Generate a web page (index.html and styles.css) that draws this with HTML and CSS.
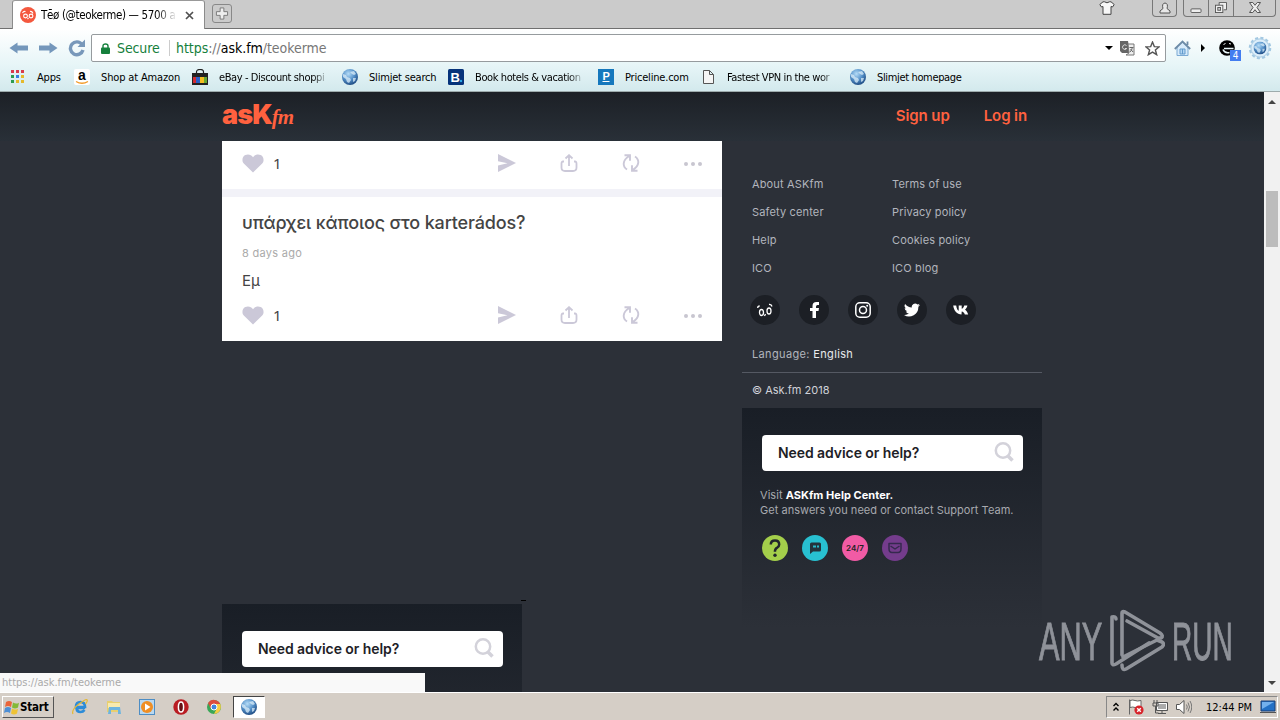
FILE: index.html
```html
<!DOCTYPE html>
<html lang="en">

<head>
  <meta charset="utf-8">
  <title>Tēø (@teokerme) — 5700 answers</title>
  <link rel="stylesheet" href="styles.css">
</head>

<body>
  <!-- shared icons -->
  <svg class="sprite" width="0" height="0">
    <defs>
      <radialGradient id="globe-fill" cx=".4" cy=".3" r=".7">
        <stop offset="0" stop-color="#b5dcf7"/>
        <stop offset=".55" stop-color="#5591c9"/>
        <stop offset="1" stop-color="#214f87"/>
      </radialGradient>
    </defs>
    <symbol id="globe" viewBox="0 0 16 16">
      <circle cx="8" cy="8" r="8" fill="url(#globe-fill)"/>
      <path d="M1 5l3 1 1 2 3 1 1 2-2 3-2-1-1-3-3-2zM8 3l4-1 2 3-2 1-2-1zM11 9l3 0-1 3-2 1z" fill="#d9ecf8" opacity=".75"/>
    </symbol>
    <symbol id="heart" viewBox="0 0 22 19">
      <path d="M11 18.500L1.800 9.600C-.5 7 .2 2.600 3.300 1.100 6-.2 9.300.6 11 3.200 12.700.6 16-.2 18.700 1.100c3.100 1.500 3.800 5.900 1.500 8.500z"/>
    </symbol>
    <symbol id="send" viewBox="0 0 18 18">
      <path d="M0 0l18 9L0 18v-6.500L9.500 9.200 0 7.200z"/>
    </symbol>
    <symbol id="share" viewBox="0 0 18 18">
      <path d="M4 7.500H3q-1.500 0-1.500 2v4q0 3.500 3.500 3.500h8q3.500 0 3.500-3.500v-4q0-2-1.500-2h-1M9 12V1.500M5.500 4.500L9 1.200l3.500 3.300" fill="none" stroke-width="1.800"/>
    </symbol>
    <symbol id="reask" viewBox="0 0 18 18">
      <path d="M5 15.500C.5 12.500 0 6.500 7.300 2M2.500 1.300h5.500v5.500M13 2.500c4.500 3 5 9-2.300 13.500M15.500 16.700H10v-5.500" fill="none" stroke-width="1.900"/>
    </symbol>
    <symbol id="search" viewBox="0 0 20 20">
      <circle cx="9" cy="8.500" r="7.200" fill="none" stroke-width="2.500"/>
      <path d="M13.500 13.500l5 5" stroke-width="3.600"/>
    </symbol>
  </svg>

  <div class="window">
    <div class="tab-strip">
      <div class="tab">
        <svg class="tab-icon" viewBox="0 0 16 16"><circle cx="8" cy="8" r="8" fill="#f4583e"/><g fill="none" stroke="#fff" stroke-width="1.100"><circle cx="5.500" cy="9" r="1.900"/><circle cx="11" cy="9" r="1.900"/><path d="M2.500 6q1-2 3-1.500M10 4.500q2-.5 3 2M7.500 12l1-1"/></g></svg>
        <span class="tab-title">Tēø (@teokerme) — 5700 a</span>
        <svg class="tab-close" viewBox="0 0 9 9"><path d="M1 1l7 7M8 1L1 8" stroke="#505050" stroke-width="1.700"/></svg>
      </div>
      <div class="new-tab"><svg viewBox="0 0 14 14"><path d="M5 1h4v4h4v4H9v4H5V9H1V5h4z" fill="#eee" stroke="#777"/></svg></div>
      <svg class="shirt" viewBox="0 0 16 14"><path d="M4 .8L.8 3.500 2.500 6 4 5.500V13.300h8V5.500L13.500 6l1.700-2.500L12 .8h-1.500q-2.500 2-5 0z" fill="#f7f7f7" stroke="#444"/></svg>
      <div class="user-button"><svg viewBox="0 0 12 12"><path d="M1 11V9l3-2.500q-1.500-5 2-5.500 3.500.5 2 5.500L11 9v2z" fill="#e8e8e8" stroke="#555"/></svg></div>
      <div class="window-buttons">
        <span class="minimize"><svg viewBox="0 0 12 12"><rect x=".5" y="7.500" width="11" height="4" rx="1" fill="#eee" stroke="#555"/></svg></span>
        <span class="restore"><svg viewBox="0 0 13 12"><path d="M4.500 3.500v-3h8v8h-3" fill="#eee" stroke="#555"/><rect x=".5" y="3.500" width="8" height="8" fill="#eee" stroke="#555"/><rect x="3" y="6" width="3" height="3" fill="#ccc" stroke="#555"/></svg></span>
        <span class="close"><svg viewBox="0 0 12 11"><path d="M.5.5h3.300L6 3.300 8.200.5h3.300L8 5.500l3.500 5H8.200L6 7.700l-2.200 2.800H.5L4 5.500z" fill="#eee" stroke="#555"/></svg></span>
      </div>
    </div>

    <div class="toolbar">
      <svg class="arrow" viewBox="0 0 19 12"><path d="M0 6L8 .5v3h10.500v5H8v3z" fill="#7497bb"/></svg>
      <svg class="arrow forward" viewBox="0 0 19 12"><path d="M19 6L11 .5v3H.5v5H11v3z" fill="#7497bb"/></svg>
      <svg class="reload" viewBox="0 0 18 18"><path d="M14 5.500A6.400 6.400 0 1 0 15 11" fill="none" stroke="#7898ba" stroke-width="3.400"/><path d="M17 .5V8H9.500z" fill="#7898ba"/></svg>
      <div class="address">
        <svg class="lock" viewBox="0 0 9 11"><rect y="4.500" width="9" height="6.500" rx="1" fill="#15803c"/><path d="M2 5V3q0-2 2.500-2T7 3v2" fill="none" stroke="#15803c" stroke-width="1.400"/></svg>
        <span class="secure">Secure</span>
        <span class="url"><span class="scheme">https</span>://<b>ask.fm</b>/teokerme</span>
        <svg class="drop" viewBox="0 0 8 4"><path d="M0 0h8L4 4z"/></svg>
        <svg class="translate" viewBox="0 0 15 15"><path d="M0 0h8l2 12H2l-2-2z" fill="#666"/><path d="M8 3h6v11H6l3-2z" fill="#eee" stroke="#777"/><path d="M6.500 4.500a2.300 2.300 0 1 0 .2 3H5" fill="none" stroke="#ddd"/><path d="M9.500 6.500h4M12.500 6q-.5 3-2.500 5M10.500 8l2.500 3" fill="none" stroke="#666"/></svg>
        <svg class="star" viewBox="0 0 14 14"><path d="M7 1l1.700 4.200 4.500.3-3.500 2.900 1.200 4.400L7 10.400l-3.900 2.400 1.200-4.400L.8 5.500l4.500-.3z" fill="none" stroke="#555" stroke-width="1.300"/></svg>
      </div>
      <svg class="home" viewBox="0 0 17 16"><path d="M3 7v8.500h11V7L8.500 2z" fill="#d8ebfa" stroke="#7baad4"/><path d="M.8 9L8.500 1.500 16.200 9M13.500 5V1.500" fill="none" stroke="#6d8ba7" stroke-width="1.800"/><path d="M6 9h5v5H6zM8.500 9v5" fill="#b3d5f2" stroke="#639bcc"/></svg>
      <svg class="more" viewBox="0 0 4 8"><path d="M0 0l4 4-4 4z"/></svg>
      <div class="extension">
        <svg viewBox="0 0 16 16"><circle cx="8" cy="8" r="7.800"/><path d="M5 8.500h9.500M4 9.500q1.500 4 6.500 3" fill="none" stroke="#e9f7f9" stroke-width="1.500"/><path d="M4.500 4.500l2-1M10 3.500l2 .5" stroke="#fff"/></svg>
        <span class="count">4</span>
      </div>
      <svg class="settings" viewBox="0 0 24 24"><circle cx="12" cy="12" r="10" fill="#d2e7f4" stroke="#a3c8e2" stroke-width="2.500" stroke-dasharray="3 2.240"/><circle cx="12" cy="12" r="9" fill="#dceefa" stroke="#b5d3e7"/><use href="#globe" x="5.500" y="5.500" width="13" height="13"/></svg>
    </div>

    <div class="bookmarks">
      <a class="apps"><svg viewBox="0 0 16 16"><path d="M1 1h3v3H1zM6 1h3v3H6zM11 1h3v3h-3z" fill="#d93b4c"/><path d="M1 6h3v3H1zM1 11h3v3H1z" fill="#2c9c50"/><path d="M6 6h3v3H6z" fill="#347ee0"/><path d="M11 6h3v3h-3zM6 11h3v3H6zM11 11h3v3h-3z" fill="#e5b92a"/></svg><span>Apps</span></a>
      <a class="amazon"><svg viewBox="0 0 16 16"><rect width="16" height="16" rx="2" fill="#fff"/><text x="4" y="11" class="amazon-a">a</text><path d="M2 12.500q6 3.500 12 0" fill="none" stroke="#f39b29" stroke-width="1.300"/></svg><span>Shop at Amazon</span></a>
      <a class="ebay"><svg viewBox="0 0 16 16"><path d="M0 4h16v12H0z" fill="#222"/><path d="M1 8h3v6H1z" fill="#d32c33"/><path d="M4 8h4v6H4z" fill="#2b60c7"/><path d="M8 8h4v6H8z" fill="#f4bd20"/><path d="M12 8h3v6h-3z" fill="#68a82f"/><path d="M4.500 7V3q0-2.500 3.500-2.500T11.500 3v4" fill="none" stroke="#222" stroke-width="1.200"/></svg><span class="fade">eBay - Discount shoppi</span></a>
      <a class="slimjet"><svg><use href="#globe"/></svg><span>Slimjet search</span></a>
      <a class="booking"><svg viewBox="0 0 16 16"><rect width="16" height="16" rx="1.500" fill="#06337b"/><text x="2.500" y="12.500" class="booking-b">B</text><circle cx="13" cy="12" r="1.200" fill="#29a8e8"/></svg><span class="fade">Book hotels &amp; vacation</span></a>
      <a class="priceline"><svg viewBox="0 0 16 16"><rect width="16" height="16" fill="#1578bd"/><text x="4.500" y="11" class="priceline-p">P</text><path d="M4.500 12.500h7" stroke="#fff"/></svg><span>Priceline.com</span></a>
      <a class="vpn"><svg viewBox="0 0 16 16"><path d="M1.500 1.500h6l4 4v9h-10zM7.500 1.500v4h4" fill="#f5f5f5" stroke="#555"/></svg><span class="fade">Fastest VPN in the wor</span></a>
      <a class="slimjet-home"><svg><use href="#globe"/></svg><span>Slimjet homepage</span></a>
    </div>

    <div class="viewport">
      <div class="page">
        <div class="header">
          <div class="logo"><span class="logo-ask">asK</span><span class="logo-fm">fm</span></div>
          <nav><a class="sign-up">Sign up</a><a class="log-in">Log in</a></nav>
        </div>
        <div class="content">
          <div class="main-column">
            <div class="card">
              <div class="actions first">
                <svg class="heart"><use href="#heart"/></svg><span class="likes">1</span>
                <svg class="action"><use href="#send"/></svg>
                <svg class="action line"><use href="#share"/></svg>
                <svg class="action line"><use href="#reask"/></svg>
                <span class="dots"><i></i><i></i><i></i></span>
              </div>
              <div class="separator"></div>
              <h2>υπάρχει κάποιος στο karterádos?</h2>
              <p class="date">8 days ago</p>
              <p class="answer">Εμ</p>
              <div class="actions">
                <svg class="heart"><use href="#heart"/></svg><span class="likes">1</span>
                <svg class="action"><use href="#send"/></svg>
                <svg class="action line"><use href="#share"/></svg>
                <svg class="action line"><use href="#reask"/></svg>
                <span class="dots"><i></i><i></i><i></i></span>
              </div>
            </div>
            <div class="dash"></div>
            <div class="help-banner">
              <div class="help-search"><span>Need advice or help?</span><svg><use href="#search"/></svg></div>
            </div>
          </div>
          <div class="side-column">
            <div class="links">
              <a>About ASKfm</a><a>Terms of use</a>
              <a>Safety center</a><a>Privacy policy</a>
              <a>Help</a><a>Cookies policy</a>
              <a>ICO</a><a>ICO blog</a>
            </div>
            <div class="social">
              <span><svg viewBox="0 0 16 16"><g fill="none" stroke="#fff" stroke-width="1.300"><ellipse cx="4.500" cy="10.500" rx="2" ry="3"/><ellipse cx="12" cy="9" rx="2" ry="3"/><path d="M.7 6q0-2 2-2M12 2.500q2.500-.3 3 2M7.500 14l1-2"/></g></svg></span>
              <span><svg viewBox="0 0 16 16"><path d="M6.500 16V9H4V6h2.500V4q0-4 4-4H13v3h-1.500Q10 3 10 4.500V6h3l-.5 3H10v7z" fill="#fff"/></svg></span>
              <span><svg viewBox="0 0 16 16"><g fill="none" stroke="#fff" stroke-width="1.500"><rect x=".8" y=".8" width="14.400" height="14.400" rx="4"/><circle cx="8" cy="8" r="3.500"/></g><circle cx="12.200" cy="3.800" r="1" fill="#fff"/></svg></span>
              <span><svg viewBox="0 0 24 24"><path d="M23.900 4.600a10 10 0 0 1-2.800.8 5 5 0 0 0 2.200-2.700 10 10 0 0 1-3.100 1.200 4.900 4.900 0 0 0-8.400 4.500A14 14 0 0 1 1.700 3.100 4.900 4.900 0 0 0 3.200 9.700a5 5 0 0 1-2.200-.6 4.900 4.900 0 0 0 3.900 4.800 5 5 0 0 1-2.200.1 4.900 4.900 0 0 0 4.600 3.400A9.900 9.900 0 0 1 0 19.500a14 14 0 0 0 21.500-12.400 10 10 0 0 0 2.400-2.500z" fill="#fff"/></svg></span>
              <span><svg viewBox="0 0 16 16"><path d="M8.500 12.500C4 12.500 1 9 .2 3.500h3c.3 3 1.500 5 2.500 5.300V3.500h3v3.300c1-.2 2.100-1.700 2.500-3.300h3.200c-.4 2-1.500 3.500-2.400 4.200.9.500 2.400 2 3.200 4.800h-3.400c-.5-1.500-1.600-2.700-3.100-2.900z" fill="#fff"/></svg></span>
            </div>
            <p class="language">Language: <b>English</b></p>
            <p class="copyright">© Ask.fm 2018</p>
            <div class="help-banner tall">
              <div class="help-search"><span>Need advice or help?</span><svg><use href="#search"/></svg></div>
              <p class="help-text">Visit <b>ASKfm Help Center.</b><br><span>Get answers you need or contact Support Team.</span></p>
              <div class="help-icons">
                <span class="green"><svg viewBox="0 0 26 26"><path d="M8.800 9.500q0-4 4.200-4t4.200 4q0 2-2.300 3.300-2 1-2 4" fill="none" stroke="#22262c" stroke-width="2.500"/><circle cx="13" cy="20.300" r="1.700" fill="#22262c"/></svg></span>
                <span class="cyan"><svg viewBox="0 0 26 26"><path d="M8 19V9q0-1.500 1.500-1.500h8Q19 7.500 19 9v6q0 1.500-1.500 1.500H11z" fill="#24333c"/><path d="M11 11.500h3M15 11.500h2" stroke="#28b9ca" stroke-width="1.800"/></svg></span>
                <span class="pink">24/7</span>
                <span class="purple"><svg viewBox="0 0 26 26"><path d="M7 8.500h12v5q0 4-3 4h-6q-3 0-3-4zM8.500 11l4.500 3 4.500-3" fill="none" stroke="#35294e" stroke-width="1.500" stroke-linejoin="round"/></svg></span>
              </div>
            </div>
          </div>
        </div>
        <div class="watermark">
          <span class="any">ANY</span>
          <svg viewBox="0 0 56 64"><g fill="none" stroke="#8f9299" stroke-width="3.600" stroke-linejoin="round" stroke-linecap="round"><path d="M13 46V4q0-2 3-1l35 21q4 3 1 5l-3 0L18 12"/><path d="M7 10q0-3-4-2v46q0 3 4 1l33-21"/><path d="M13 56q0 6 4 4l36-22q3-3 0-5l-5-2L14 48"/></g></svg>
          <span class="run">RUN</span>
        </div>
        <div class="status">https://ask.fm/teokerme</div>
      </div>
      <div class="scrollbar">
        <svg viewBox="0 0 8 4"><path d="M4 0l4 4H0z"/></svg>
        <div class="thumb"></div>
        <svg class="down" viewBox="0 0 8 4"><path d="M0 0h8L4 4z"/></svg>
      </div>
    </div>

    <div class="taskbar">
      <div class="start"><svg viewBox="0 0 16 16"><path d="M2 3q3-2 6 0L7 8Q4 6 1 8z" fill="#e9653a"/><path d="M9 3.500q3 2 6 .2L14 8.500q-3 2-6 0z" fill="#83b936"/><path d="M1 9q3-2 6 0l-1 5Q3 12 0 14z" fill="#4d8fd5"/><path d="M8 9.500q3 2 6 .2L13 14.500q-3 2-6 0z" fill="#efc334"/></svg><span>Start</span></div>
      <div class="quick-launch">
        <svg viewBox="0 0 16 16"><path d="M13 9H4.500q.5 4 4 4 2.500 0 4-2M4 8q0-5 4.500-5t4.500 5z" fill="none" stroke="#2d8cd8" stroke-width="2.700"/><path d="M1 15Q-1 11 7 5t8-4q1 1-1.500 4" fill="none" stroke="#e5b936" stroke-width="1.200"/></svg>
        <svg viewBox="0 0 16 16"><path d="M1 2h5l1 1h7v10H1z" fill="#e8cf70"/><path d="M2 4h12v5H2z" fill="#f8eaae"/><path d="M3 8h11l1 7h-3v-4H5v4H2z" fill="#6db4df"/></svg>
        <svg viewBox="0 0 16 16"><rect x=".5" y=".5" width="15" height="15" fill="#b9d8f0" stroke="#4d8dc4"/><circle cx="8" cy="8" r="6" fill="#ef8e24"/><path d="M6 4.500L11.500 8 6 11.500z" fill="#fff"/></svg>
        <svg viewBox="0 0 16 16"><circle cx="8" cy="8" r="7.700" fill="#b91c22"/><ellipse cx="8" cy="8" rx="2.600" ry="5" fill="#651015" stroke="#fff" stroke-width="1.500"/></svg>
        <svg viewBox="0 0 16 16"><circle cx="8" cy="8" r="7" fill="#3aa757"/><path d="M2 4Q5-.5 10 1.300 13 2.500 14.300 5H8L5 10z" fill="#dd4b3e"/><path d="M8 5h6.300q2 6-3.300 9.300L8 15l3-6z" fill="#f7cd43"/><circle cx="8" cy="8" r="3" fill="#4285df" stroke="#fff"/></svg>
        <div class="active"><svg><use href="#globe"/></svg></div>
      </div>
      <div class="tray">
        <svg class="chevrons" viewBox="0 0 6 10"><path d="M.5 4L3 1.500 5.500 4M.5 8.500L3 6l2.500 2.500" fill="none" stroke="#000" stroke-width="1.400"/></svg>
        <svg class="flag" viewBox="0 0 16 16"><path d="M1.500.5v15M2 1.500q3-1 5 0t6 0v7q-4 1-6 0t-5 0z" fill="#fff" stroke="#666"/><circle cx="11" cy="11" r="4.600" fill="#d7252c"/><path d="M9.200 9.200l3.600 3.600M12.800 9.200l-3.600 3.600" stroke="#fff" stroke-width="1.400"/></svg>
        <svg class="network" viewBox="0 0 16 16"><path d="M4.500 3.500h11v8h-11z" fill="#aaa" stroke="#555"/><path d="M5.500 4.500h9v6h-9z" fill="none" stroke="#fff"/><path d="M10 12v2M6 14.500h8M2 1v3M5 1v3M1 4h5v3H1zM3.500 7v7h3" fill="none" stroke="#555"/></svg>
        <svg class="sound" viewBox="0 0 16 16"><path d="M.5 5.500h3L8 1.500v13l-4.500-4h-3z" fill="#fff" stroke="#555"/><path d="M10.500 5.500q1.500 2.500 0 5M12 3.500q3 4.500 0 9M14 2q3.500 6 0 12" fill="none" stroke="#777"/></svg>
        <span class="clock">12:44 PM</span>
        <svg class="desktop" viewBox="0 0 16 14"><path d="M1 1h14v10H1z" fill="#2370c5" stroke="#1c3e75"/><path d="M2 2h12L2 9z" fill="#73b0ed"/><path d="M0 12h16v1H0z" fill="#555"/></svg>
      </div>
    </div>
  </div>
</body>

</html>
```
FILE: styles.css
```css
:root {
  --page-color: #2c3038;
  --dark-color: #191e26;
  --ask-color: #ff613f;
  --icon-color: #cbc8d8;
  --system-font: "DejaVu Sans Condensed", "DejaVu Sans", sans-serif;
  --page-font: Inter, "Open Sans", sans-serif;
}

* {
  box-sizing: border-box;
}

body {
  margin: 0;
  overflow: hidden;
}

p, h2 {
  margin: 0;
}

svg {
  display: block;
  flex: none;
}

.sprite {
  position: absolute;
}

.window {
  display: flex;
  flex-direction: column;
  width: 1280px;
  height: 720px;
  font-family: var(--system-font);
  font-size: 11px;
  font-stretch: condensed;
  white-space: nowrap;
}

/* tabs */
.tab-strip {
  display: flex;
  height: 29px;
  padding-left: 12px;
  background: #cbcbcb;
  border-bottom: 1px solid #707070;
}

.tab {
  display: flex;
  align-items: center;
  width: 193px;
  height: 29px;
  padding: 0 0 0 7px;
  background: #fff;
  border: 1px solid #8b8b8b;
  border-top-color: #999;
  border-bottom: 0;
  border-radius: 3px 3px 0 0;
}

.tab-icon {
  width: 16px;
  height: 16px;
}

.tab-title {
  width: 136px;
  margin-left: 5px;
  font-size: 11.500px;
  letter-spacing: -.35px;
}

.tab-title, .fade {
  -webkit-mask-image: linear-gradient(to right, #000 85%, transparent);
  mask-image: linear-gradient(to right, #000 85%, transparent);
}

.tab-close {
  width: 9px;
  height: 9px;
  margin-left: 8px;
}

.new-tab {
  width: 20px;
  height: 19px;
  margin: 4px 0 0 7px;
  padding: 2px;
  border: 1px solid #888;
  border-radius: 3px;
}

.new-tab svg {
  width: 14px;
  height: 13px;
}

.shirt {
  width: 16px;
  height: 14px;
  margin: 1px 37px 0 auto;
}

.user-button, .window-buttons {
  height: 17px;
  border: 1px solid #777;
  border-top: 0;
  border-radius: 0 0 4px 4px;
}

.user-button {
  width: 25px;
  padding: 2px 0 0 6px;
  margin-right: 6px;
}

.user-button svg {
  width: 12px;
  height: 12px;
}

.window-buttons {
  display: flex;
  width: 93px;
  margin-right: 4px;
}

.window-buttons span {
  display: flex;
  justify-content: center;
  width: 25px;
  padding-top: 2px;
  border-right: 1px solid #777;
}

.window-buttons svg {
  width: 12px;
  height: 11px;
}

.window-buttons .close {
  width: 41px;
  border: 0;
}

/* toolbar */
.toolbar {
  display: flex;
  align-items: center;
  height: 37px;
  padding-left: 9px;
  background: linear-gradient(#fff, #e6f5f7);
}

.arrow {
  width: 20px;
  height: 12px;
}

.forward {
  margin-left: 9px;
}

.reload {
  width: 18px;
  height: 18px;
  margin-left: 10px;
}

.address {
  display: flex;
  align-items: center;
  width: 1075px;
  height: 28px;
  margin: 1px 0 0 5px;
  padding-left: 9px;
  background: #fff;
  border: 1px solid #969b9e;
  border-radius: 2px;
  font-size: 14px;
}

.lock {
  width: 9px;
  height: 11px;
}

.secure {
  width: 53px;
  margin-left: 7px;
  color: #15803c;
  letter-spacing: -.1px;
  border-right: 1px solid #ccc;
}

.url {
  margin-left: 6px;
  color: #777;
  letter-spacing: -.05px;
}

.url b {
  color: #000;
  font-weight: normal;
}

.scheme {
  color: #15803c;
}

.drop {
  width: 8px;
  height: 4px;
  margin-left: auto;
}

.translate {
  width: 15px;
  height: 15px;
  margin-left: 7px;
}

.star {
  width: 15px;
  height: 15px;
  margin: 0 5px 0 10px;
}

.home {
  width: 17px;
  height: 16px;
  margin-left: 8px;
}

.more {
  width: 4px;
  height: 8px;
  margin-left: 10px;
}

.extension {
  position: relative;
  width: 16px;
  height: 16px;
  margin-left: 14px;
}

.count {
  position: absolute;
  left: 11px;
  top: 10px;
  width: 11px;
  height: 11px;
  background: #427df0;
  color: #fff;
  font-size: 10px;
  line-height: 11px;
  text-align: center;
}

.settings {
  width: 24px;
  height: 24px;
  margin-left: 13px;
}

/* bookmarks */
.bookmarks {
  display: flex;
  height: 26px;
  padding-left: 10px;
  background: linear-gradient(#e6f5f7, #d3e9ed);
  border-bottom: 1px solid #9dabac;
}

.bookmarks a {
  display: flex;
  align-items: center;
  height: 22px;
  letter-spacing: -.2px;
}

.bookmarks svg {
  width: 16px;
  height: 16px;
  margin-right: 11px;
}

.apps { width: 64px; }
.amazon { width: 118px; }
.ebay { width: 150px; }
.slimjet { width: 106px; }
.booking { width: 150px; }
.priceline { width: 104px; }
.vpn { width: 148px; }

.bookmarks .amazon {
  letter-spacing: -.15px;
}

.bookmarks .slimjet-home {
  letter-spacing: -.35px;
}

.ebay span, .booking span, .vpn span {
  width: 110px;
  letter-spacing: -.4px;
}

.bookmarks .vpn svg {
  margin-right: 9px;
}

.amazon-a {
  font: bold 14px "Liberation Sans", sans-serif;
}

.booking-b {
  font: bold 13px "Liberation Sans", sans-serif;
  fill: #fff;
}

.priceline-p {
  font: bold 11px "Liberation Sans", sans-serif;
  fill: #fff;
}

/* page */
.viewport {
  display: flex;
  height: 600px;
}

.page {
  position: relative;
  width: 1264px;
  overflow: hidden;
  background: var(--page-color);
  font-family: var(--page-font);
}

.header {
  display: flex;
  justify-content: space-between;
  height: 49px;
  padding: 0 222px;
  background: linear-gradient(#1c2026, #293038);
  color: var(--ask-color);
}

.logo {
  display: flex;
  padding-top: 9px;
}

.logo-ask {
  font-size: 27px;
  font-weight: 900;
  line-height: 28px;
  letter-spacing: -.9px;
}

.logo-fm {
  padding-top: 3px;
  font: italic bold 21px/26px "Liberation Serif", serif;
  letter-spacing: -1px;
}

nav {
  display: flex;
  gap: 34px;
  padding: 14px 15px 0 0;
  font-size: 15px;
  font-weight: 600;
  line-height: 20px;
  letter-spacing: -.1px;
}

.content {
  display: flex;
  gap: 20px;
  width: 820px;
  margin-left: 222px;
}

.main-column {
  width: 500px;
}

.card {
  height: 200px;
  background: #fff;
  color: #444;
}

.actions {
  display: flex;
  align-items: center;
  height: 46px;
  padding: 0 20px;
  fill: var(--icon-color);
  stroke: none;
}

.first {
  height: 48px;
  padding-bottom: 4px;
}

.heart {
  width: 22px;
  height: 19px;
}

.likes {
  width: 225px;
  margin-left: 9px;
  font: 15px "Noto Sans", sans-serif;
}

.action {
  width: 18px;
  height: 18px;
  margin-right: 44px;
}

.dots {
  display: flex;
  gap: 3px;
  padding-top: 1px;
}

.line {
  stroke: var(--icon-color);
}

.dots i {
  width: 4px;
  height: 4px;
  border-radius: 2px;
  background: #c8c6d0;
}

.separator {
  height: 8px;
  background: #f2f2f8;
}

.card h2 {
  padding: 13px 20px 0;
  font-size: 18px;
  font-weight: 500;
  line-height: 26px;
  letter-spacing: -.14px;
}

.date {
  padding: 8px 20px 0;
  color: #aaa;
  font-size: 11px;
  line-height: 18px;
  letter-spacing: .3px;
}

.answer {
  padding: 8px 20px 0;
  font-size: 15px;
  line-height: 22px;
}

.dash {
  width: 5px;
  height: 1px;
  margin: 259px 0 3px 299px;
  background: #000;
}

.help-banner {
  width: 300px;
  height: 220px;
  padding: 27px 20px 0;
  background: linear-gradient(var(--dark-color), var(--page-color));
}

.help-search {
  display: flex;
  justify-content: space-between;
  width: 261px;
  height: 36px;
  padding: 7px 9px 0 16px;
  background: #fff;
  border-radius: 4px;
  color: #1e2126;
  font-size: 14px;
  font-weight: 600;
  line-height: 22px;
  letter-spacing: -.07px;
}

.help-search svg {
  width: 20px;
  height: 20px;
  stroke: #d3d2da;
}

.side-column {
  width: 300px;
  color: #b2b5bd;
  font-size: 11px;
}

.links {
  display: grid;
  grid-template-columns: 140px 140px;
  padding: 29px 10px 0;
  line-height: 28px;
  letter-spacing: .15px;
}

.social {
  display: flex;
  gap: 19px;
  padding: 13px 8px 0;
}

.social span {
  width: 30px;
  height: 30px;
  padding: 7px;
  border-radius: 50%;
  background: #1c1f25;
}

.social svg {
  width: 16px;
  height: 16px;
}

.language {
  height: 48px;
  padding: 20px 10px 0;
  border-bottom: 1px solid #555963;
  line-height: 18px;
  letter-spacing: .35px;
}

.language b {
  color: #e9ebef;
  font-weight: 400;
}

.copyright {
  height: 35px;
  padding: 8px 10px 0;
  color: #d0d2d8;
  line-height: 18px;
}

.help-text {
  margin: 17px 0 0 -2px;
  color: #a7a9ae;
  font-size: 11px;
  line-height: 15px;
  letter-spacing: .04px;
}

.help-text b {
  color: #fff;
}

.help-icons {
  display: flex;
  gap: 14px;
  margin-top: 17px;
}

.help-icons > span {
  width: 26px;
  height: 26px;
  border-radius: 50%;
}

.green { background: #a4cf4b; }
.cyan { background: #28c0d1; }
.purple { background: #743c8c; }

.pink {
  background: #f15ba5;
  color: #222;
  font-size: 8px;
  font-weight: 600;
  line-height: 26px;
  text-align: center;
}

.watermark {
  position: absolute;
  left: 1039px;
  top: 517px;
  display: flex;
  align-items: center;
  gap: 7px;
  color: #8f9299;
  font: 54px/64px "Liberation Sans", sans-serif;
  -webkit-text-stroke: 1px #8f9299;
}

.watermark svg {
  width: 56px;
  height: 64px;
}

.any, .run {
  width: 63px;
  transform: scaleX(.57);
  transform-origin: left;
}

.run {
  transform: scaleX(.52);
}

.status {
  position: absolute;
  left: 0;
  bottom: 0;
  width: 425px;
  height: 19px;
  padding-left: 2px;
  background: #f9f9f9;
  color: #aaa;
  font: 11px/19px var(--system-font);
}

.scrollbar {
  display: flex;
  flex-direction: column;
  align-items: center;
  width: 16px;
  padding: 8px 0 7px;
  background: #f1f1f1;
  fill: #444;
}

.scrollbar svg {
  width: 8px;
  height: 4px;
}

.thumb {
  width: 12px;
  height: 56px;
  margin-top: 87px;
  background: #bcbcbc;
}

.scrollbar .down {
  margin-top: auto;
}

/* taskbar */
.taskbar {
  display: flex;
  height: 28px;
  padding: 3px 2px 2px;
  background: #d5cec6;
  border-top: 1px solid #fff;
}

.start {
  display: flex;
  align-items: center;
  width: 52px;
  height: 22px;
  border: 1px solid;
  border-color: #fff #555 #555 #fff;
  font-size: 11.500px;
  font-weight: bold;
  letter-spacing: -.2px;
}

.start svg {
  width: 16px;
  height: 16px;
  margin-left: 1px;
}

.quick-launch {
  display: flex;
  align-items: center;
  gap: 17.500px;
  margin-left: 18px;
}

.quick-launch svg {
  width: 16px;
  height: 16px;
}

.active {
  width: 32px;
  height: 22px;
  margin-left: -7px;
  padding: 2px 7px;
  background: #fff;
  border: 1px solid;
  border-color: #444 #fff #fff #444;
}

.tray {
  display: flex;
  align-items: center;
  width: 172px;
  margin-left: auto;
  padding-left: 6px;
  border: 1px solid;
  border-color: #888 #fff #fff #888;
}

.chevrons {
  width: 6px;
  height: 10px;
}

.flag, .network, .sound {
  width: 16px;
  height: 16px;
}

.flag { margin-left: 9px; }
.network { margin-left: 8px; }
.sound { margin-left: 8px; }

.clock {
  width: 45px;
  margin-left: 14px;
}

.desktop {
  width: 16px;
  height: 14px;
  margin-left: 9px;
}
```
